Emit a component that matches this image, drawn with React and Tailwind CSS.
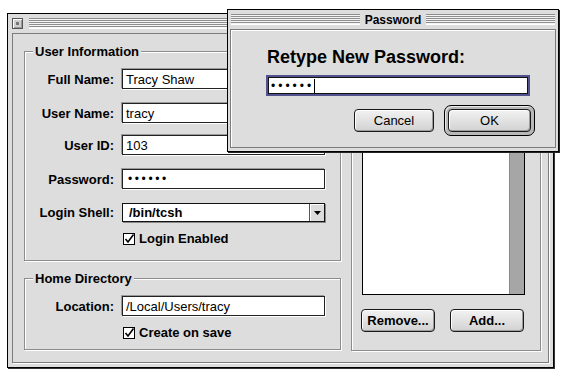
import React from "react";

function Stripes({ className }) {
  return (
    <div
      className={
        "h-[11px] bg-[repeating-linear-gradient(to_bottom,#8e8e8e_0px,#8e8e8e_1px,#f4f4f4_1px,#f4f4f4_2px)] shadow-[inset_0_-1px_0_#fff] " +
        className
      }
    />
  );
}

function Field({ children, className = "" }) {
  return (
    <div
      className={
        "h-[20px] w-[203px] bg-white border border-[#222] shadow-[-1px_-1px_0_#9a9a9a,1px_1px_0_#fff] flex items-center pl-[3px] text-[13px] text-black leading-none " +
        className
      }
    >
      {children}
    </div>
  );
}

function Row({ label, children, className = "" }) {
  return (
    <div className={"flex items-center " + className}>
      <div className="w-[89px] text-right text-[13px] font-bold leading-[15px]">{label}</div>
      <div className="ml-[8px]">{children}</div>
    </div>
  );
}

function Check({ label, className = "" }) {
  return (
    <div className={"flex items-center ml-[98px] " + className}>
      <svg width="12" height="12" viewBox="0 0 12 12" className="block">
        <rect x="0.5" y="0.5" width="11" height="11" fill="#fff" stroke="#000" />
        <path d="M2.5 6 L5 9 L10.5 1.5" fill="none" stroke="#000" strokeWidth="1.6" />
      </svg>
      <span className="ml-[4px] text-[13px] font-bold leading-[15px]">{label}</span>
    </div>
  );
}

function Btn({ children, className = "" }) {
  return (
    <div
      className={
        "h-[23px] rounded-[4px] border border-[#1a1a1a] bg-[linear-gradient(#f2f2f2,#d2d2d2)] shadow-[inset_1px_1px_0_#fff,inset_-1px_-1px_0_#9c9c9c] flex items-center justify-center text-[13px] leading-none text-black " +
        className
      }
    >
      {children}
    </div>
  );
}

function GroupLabel({ children }) {
  return (
    <div className="-mt-[8px] ml-[8px] self-start px-[2px] bg-[#dddddd] text-[13px] font-bold leading-[15px]">
      {children}
    </div>
  );
}

const groupCls =
  "border border-[#8c8c8c] shadow-[inset_1px_1px_0_#fff,1px_1px_0_#fff] flex flex-col";

export default function App() {
  return (
    <div className="relative w-[568px] h-[378px] overflow-hidden bg-white font-['Liberation_Sans',Arial,sans-serif] text-black">
      {/* Main window */}
      <div className="ml-[7px] mt-[13px] w-[547px] h-[355px] border border-black bg-[#dddddd] shadow-[1px_1px_0_#333] flex flex-col">
        <div className="h-[19px] shrink-0 flex items-center px-[4px] gap-[6px]">
          <div className="w-[11px] h-[11px] border border-[#555] bg-[#cfcfcf] shadow-[inset_1px_1px_0_#fff,inset_-1px_-1px_0_#999] flex items-center justify-center">
            <div className="w-[3px] h-[3px] bg-[#777]" />
          </div>
          <Stripes className="flex-1" />
        </div>
        <div className="flex-1 mx-[4px] mb-[4px] border border-[#7c7c7c] shadow-[1px_1px_0_#fff] flex pl-[11px] pt-[17px] gap-[10px]">
          {/* Left column */}
          <div className="w-[317px] flex flex-col">
            <div className={groupCls + " h-[210px]"}>
              <GroupLabel>User Information</GroupLabel>
              <Row label="Full Name:" className="mt-[10px]">
                <Field>Tracy Shaw</Field>
              </Row>
              <Row label="User Name:" className="mt-[14px]">
                <Field>tracy</Field>
              </Row>
              <Row label="User ID:" className="mt-[12px]">
                <Field>103</Field>
              </Row>
              <Row label="Password:" className="mt-[14px]">
                <Field>
                  <span className="text-[12px] tracking-[2.6px] pl-[2px]">••••••</span>
                </Field>
              </Row>
              <Row label="Login Shell:" className="mt-[14px]">
                <div className="h-[19px] w-[203px] bg-white border border-[#111] shadow-[1px_1px_0_#888] flex items-center">
                  <span className="flex-1 pl-[6px] text-[13px] font-bold leading-none">/bin/tcsh</span>
                  <div className="w-[15px] self-stretch border-l border-[#555] bg-[#dcdcdc] shadow-[inset_1px_1px_0_#fff] flex items-center justify-center">
                    <svg width="7" height="4" viewBox="0 0 7 4" className="block">
                      <path d="M0 0 H7 L3.5 4 Z" fill="#000" />
                    </svg>
                  </div>
                </div>
              </Row>
              <Check label="Login Enabled" className="mt-[9px]" />
            </div>
            <div className={groupCls + " h-[72px] mt-[17px]"}>
              <GroupLabel>Home Directory</GroupLabel>
              <Row label="Location:" className="mt-[10px]">
                <Field className="h-[19px]">/Local/Users/tracy</Field>
              </Row>
              <Check label="Create on save" className="mt-[9px]" />
            </div>
          </div>
          {/* Right column */}
          <div className={groupCls + " w-[190px] h-[300px]"}>
            <div className="mt-[16px] ml-[10px] w-[163px] h-[227px] border border-black bg-white flex justify-end">
              <div className="w-[15px] bg-[#a6a6a6] border-l border-[#888]" />
            </div>
            <div className="mt-[14px] ml-[9px] flex gap-[15px]">
              <Btn className="w-[74px] font-bold">Remove...</Btn>
              <Btn className="w-[74px] font-bold">Add...</Btn>
            </div>
          </div>
        </div>
      </div>

      {/* Password dialog */}
      <div className="absolute left-[227px] top-[9px] w-[332px] h-[143px] border border-black bg-[#dddddd] shadow-[1px_1px_0_#222] flex flex-col">
        <div className="h-[19px] shrink-0 flex items-center px-[3px] gap-[3px]">
          <Stripes className="flex-1" />
          <span className="text-[12px] font-bold px-[2px] leading-none">Password</span>
          <Stripes className="flex-1" />
        </div>
        <div className="flex-1 mx-[2px] mb-[3px] border border-[#7c7c7c] shadow-[inset_1px_1px_0_#fff] flex flex-col">
          <div className="mt-[17px] ml-[36px] text-[18px] font-bold leading-[21px]">Retype New Password:</div>
          <div className="mt-[7px] ml-[35px] w-[264px] h-[21px] border-2 border-[#52528f] bg-white flex">
            <div className="flex-1 border border-[#111] flex items-center pl-[2px]">
              <span className="text-[12px] tracking-[3px] leading-none">••••••</span>
              <span className="w-px h-[14px] bg-black" />
            </div>
          </div>
          <div className="mt-[9px] flex justify-end items-center pr-[20px] gap-[10px]">
            <Btn className="w-[80px]">Cancel</Btn>
            <div className="rounded-[7px] border border-black bg-[#b8b8b8] shadow-[inset_1px_1px_0_#e8e8e8] p-[3px]">
              <Btn className="w-[83px]">OK</Btn>
            </div>
          </div>
        </div>
      </div>
    </div>
  );
}
